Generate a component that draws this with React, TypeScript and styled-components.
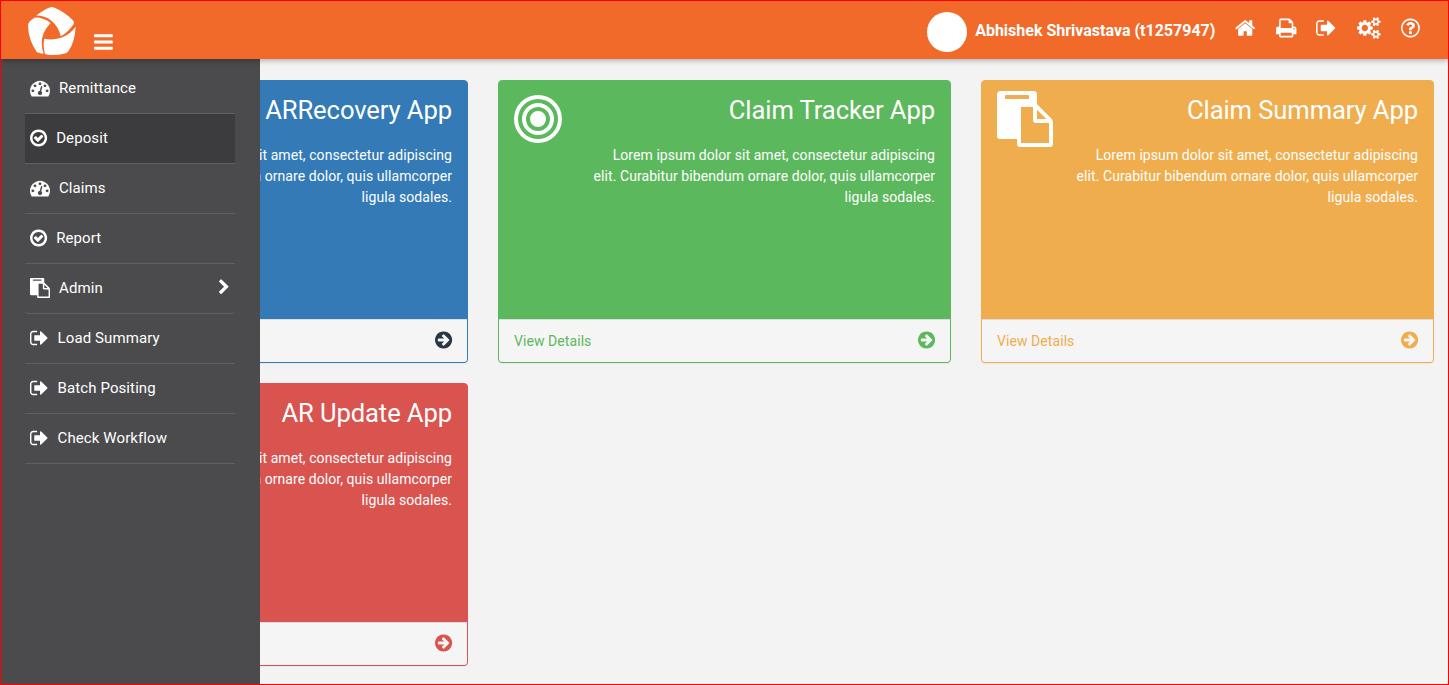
import React from "react";
import styled, { createGlobalStyle } from "styled-components";

const GlobalStyle = createGlobalStyle`
  *, *::before, *::after { box-sizing: border-box; }
  body {
    margin: 0;
    background: #f3f3f3;
    font-family: Roboto, "Liberation Sans", sans-serif;
    font-size: 15px;
    color: #fff;
  }
`;

/* Glyphs are drawn on a 1792-unit em: [left offset, advance width, outline]. */
const disc =
  "q0 209-103 385.5t-279.5 279.5-385.5 103-385.5-103-279.5-279.5-103-385.5 103-385.5 279.5-279.5 385.5-103 385.5 103 279.5 279.5 103 385.5z";
const bar = "v128q0 26-19 45t-45 19h-1408q-26 0-45-19t-19-45v-128q0-26 19-45t45-19h1408q26 0 45 19t19 45z";
const smallCog =
  "v140q0 16-149 31-12 27-30 52 51 113 51 138 0 4-4 7-122 71-124 71-8 0-46-47t-52-68q-20 2-30 2t-30-2q-14 21-52 68t-46 47q-2 0-124-71-4-3-4-7 0-25 51-138-18-25-30-52-149-15-149-31v-140q0-16 149-31 13-29 30-52-51-113-51-138 0-4 4-7 4-2 35-20t59-34 30-16q8 0 46 46.5t52 67.5q20-2 30-2t30 2q51-71 92-112l6-2q4 0 124 70 4 3 4 7 0 25-51 138 17 23 30 52 149 15 149 31z";
const dot = "q0-53-37.5-90.5t-90.5-37.5-90.5 37.5-37.5 90.5 37.5 90.5 90.5 37.5 90.5-37.5 37.5-90.5z";

const glyphs = {
  bars: [128, 1536, `M1664 1344${bar}M1664 832${bar}M1664 320${bar}`],
  home: [64, 1664, "M1472 992v480q0 26-19 45t-45 19h-384v-384h-256v384h-384q-26 0-45-19t-19-45v-480q0-1 .5-3t.5-3l575-474 575 474q1 2 1 6zm223-69l-62 74q-8 9-21 11h-3q-13 0-21-7l-692-577-692 577q-12 8-24 7-13-2-21-11l-62-74q-8-10-7-23.5t11-21.5l719-599q32-26 76-26t76 26l244 204v-195q0-14 9-23t23-9h192q14 0 23 9t9 23v408l219 182q10 8 11 21.5t-7 23.5z"],
  print: [64, 1664, "M448 1536h896v-256h-896v256zm0-640h896v-384h-160q-40 0-68-28t-28-68v-160h-640v640zm1152 64q0-26-19-45t-45-19-45 19-19 45 19 45 45 19 45-19 19-45zm128 0v416q0 13-9.5 22.5t-22.5 9.5h-224v160q0 40-28 68t-68 28h-960q-40 0-68-28t-28-68v-160h-224q-13 0-22.5-9.5t-9.5-22.5v-416q0-79 56.5-135.5t135.5-56.5h64v-544q0-40 28-68t68-28h672q40 0 88 20t76 48l152 152q28 28 48 76t20 88v256h64q79 0 135.5 56.5t56.5 135.5z"],
  signOut: [64, 1664, "M704 1440q0 4 1 20t.5 26.5-3 23.5-10 19.5-20.5 6.5h-320q-119 0-203.5-84.5t-84.5-203.5v-704q0-119 84.5-203.5t203.5-84.5h320q13 0 22.5 9.5t9.5 22.5q0 4 1 20t.5 26.5-3 23.5-10 19.5-20.5 6.5h-320q-66 0-113 47t-47 113v704q0 66 47 113t113 47h312l11.5 1 11.5 3 8 5.5 7 9 2 13.5zm928-544q0 26-19 45l-544 544q-19 19-45 19t-45-19-19-45v-288h-448q-26 0-45-19t-19-45v-384q0-26 19-45t45-19h448v-288q0-26 19-45t45-19 45 19l544 544q19 19 19 45z"],
  cogs: [0, 1920, `M896 896q0-106-75-181t-181-75-181 75-75 181 75 181 181 75 181-75 75-181zm768 512q0-52-38-90t-90-38-90 38-38 90q0 53 37.5 90.5t90.5 37.5 90.5-37.5 37.5-90.5zm0-1024q0-52-38-90t-90-38-90 38-38 90q0 53 37.5 90.5t90.5 37.5 90.5-37.5 37.5-90.5zm-384 421v185q0 10-7 19.5t-16 10.5l-155 24q-11 35-32 76 34 48 90 115 7 11 7 20 0 12-7 19-23 30-82.5 89.5t-78.5 59.5q-11 0-21-7l-115-90q-37 19-77 31-11 108-23 155-7 24-30 24h-186q-11 0-20-7.5t-10-17.5l-23-153q-34-10-75-31l-118 89q-7 7-20 7-11 0-21-8-144-133-144-160 0-9 7-19 10-14 41-53t47-61q-23-44-35-82l-152-24q-10-1-17-9.5t-7-19.5v-185q0-10 7-19.5t16-10.5l155-24q11-35 32-76-34-48-90-115-7-11-7-20 0-12 7-20 22-30 82-89t79-59q11 0 21 7l115 90q34-18 77-32 11-108 23-154 7-24 30-24h186q11 0 20 7.5t10 17.5l23 153q34 10 75 31l118-89q8-7 20-7 11 0 21 8 144 133 144 160 0 8-7 19-12 16-42 54t-45 60q23 48 34 82l152 23q10 2 17 10.5t7 19.5zM1920 1338${smallCog}M1920 314${smallCog}`],
  help: [128, 1536, `M1008 1200v160q0 14-9 23t-23 9h-160q-14 0-23-9t-9-23v-160q0-14 9-23t23-9h160q14 0 23 9t9 23zm256-496q0 50-15 90t-45.5 69-52 44-59.5 36q-32 18-46.5 28t-26 24-11.5 29v32q0 14-9 23t-23 9h-160q-14 0-23-9t-9-23v-68q0-35 10.5-64.5t24-47.5 39-35.5 41-25.5 44.5-21q53-25 75-43t22-49q0-42-43.5-71.5t-95.5-29.5q-56 0-95 27-29 20-80 83-9 12-25 12-11 0-19-6l-108-82q-10-7-12-20t5-23q122-192 349-192 129 0 238.5 89.5t109.5 214.5zm-368-448q-130 0-248.5 51t-204 136.5-136.5 204-51 248.5 51 248.5 136.5 204 204 136.5 248.5 51 248.5-51 204-136.5 136.5-204 51-248.5-51-248.5-136.5-204-204-136.5-248.5-51zM1664 896${disc}`],
  gauge: [0, 1792, `M384 1152${dot}M576 704${dot}M1004 1185l101-382q6-26-7.5-48.5t-38.5-29.5-48 6.5-30 39.5l-101 382q-60 5-107 43.5t-63 98.5q-20 77 20 146t117 89 146-20 89-117q16-60-6-117t-72-91zM1664 1152${dot}M1024 512${dot}M1472 704${dot}M1792 1152q0 261-141 483-19 29-54 29h-1402q-35 0-54-29-141-221-141-483 0-182 71-348t191-286 286-191 348-71 348 71 286 191 191 286 71 348z`],
  check: [128, 1536, `M1299 813l-422 422q-19 19-45 19t-45-19l-294-294q-19-19-19-45t19-45l102-102q19-19 45-19t45 19l147 147 275-275q19-19 45-19t45 19l102 102q19 19 19 45t-19 45zm141 83q0-148-73-273t-198-198-273-73-273 73-198 198-73 273 73 273 198 198 273 73 273-73 198-198 73-273zM1664 896${disc}`],
  paste: [0, 1792, "M768 1664h896v-640h-416q-40 0-68-28t-28-68v-416h-384v1152zm256-1440v-64q0-13-9.5-22.5t-22.5-9.5h-704q-13 0-22.5 9.5t-9.5 22.5v64q0 13 9.5 22.5t22.5 9.5h704q13 0 22.5-9.5t9.5-22.5zm256 672h299l-299-299v299zm512 128v672q0 40-28 68t-68 28h-960q-40 0-68-28t-28-68v-160h-544q-40 0-68-28t-28-68v-1344q0-40 28-68t68-28h1088q40 0 68 28t28 68v328q21 13 36 28l408 408q28 28 48 76t20 88z"],
  chevron: [346, 1036, "M1363 877l-742 742q-19 19-45 19t-45-19l-166-166q-19-19-19-45t19-45l531-531-531-531q-19-19-19-45t19-45l166-166q19-19 45-19t45 19l742 742q19 19 19 45t-19 45z"],
  arrow: [128, 1536, `M1413 896q0-27-18-45l-91-91-362-362q-18-18-45-18t-45 18l-91 91q-18 18-18 45t18 45l189 189h-502q-26 0-45 19t-19 45v128q0 26 19 45t45 19h502l-189 189q-19 19-19 45t19 45l91 91q18 18 45 18t45-18l362-362 91-91q18-18 18-45zM1664 896${disc}`],
  target: [128, 1536, "M1152 896a256 256 0 1 1-512 0a256 256 0 1 1 512 0zM1408 896a512 512 0 1 1-1024 0a512 512 0 1 1 1024 0zM1280 896a384 384 0 1 0-768 0a384 384 0 1 0 768 0zM1664 896a768 768 0 1 1-1536 0a768 768 0 1 1 1536 0zM1536 896a640 640 0 1 0-1280 0a640 640 0 1 0 1280 0z"],
} as const;

type GlyphName = keyof typeof glyphs;

const GlyphSvg = styled.svg`
  display: block;
  flex: none;
  fill: currentColor;
  overflow: visible;
`;

function Glyph({ name, size, className }: { name: GlyphName; size: number; className?: string }) {
  const [left, advance, d] = glyphs[name];
  return (
    <GlyphSvg className={className} width={(size * advance) / 1792} height={size} viewBox={`${left} 0 ${advance} 1792`}>
      <path d={d} fillRule={name === "target" ? "evenodd" : "nonzero"} />
    </GlyphSvg>
  );
}

const Page = styled.div`
  position: relative;
  height: 685px;
  border: 1px solid #f00;
  overflow: hidden;
  background: #f3f3f3;
`;

const Navbar = styled.header`
  position: relative;
  z-index: 3;
  display: flex;
  align-items: flex-start;
  height: 58px;
  padding: 0 28.6px 0 26px;
  background: #f26a2a;
  box-shadow: 0 2px 5px rgba(0, 0, 0, 0.26);
`;

const Logo = styled.svg`
  width: 50px;
  height: 50px;
  margin-top: 5px;
  fill: #fff;
`;

const MenuButton = styled.div`
  margin: 30px auto 0 17px;
`;

const Avatar = styled.div`
  width: 40px;
  height: 40px;
  margin-top: 11px;
  border-radius: 50%;
  background: #fff;
`;

const UserName = styled.strong`
  margin: 19px 0 0 8px;
  font-size: 16px;
  line-height: 21px;
  font-weight: 700;
  white-space: nowrap;
`;

const Tools = styled.nav`
  display: flex;
  gap: 20.1px;
  margin: 16px 0 0 20px;
`;

const Sidebar = styled.aside`
  position: absolute;
  z-index: 2;
  top: 58px;
  bottom: 0;
  left: 0;
  width: 259px;
  padding: 5px 25px 0 24px;
  background: #4b4b4d;
`;

const MenuItem = styled.div<{ $active?: boolean; $rounded?: boolean }>`
  display: flex;
  align-items: center;
  gap: 9px;
  height: 50px;
  padding: 0 6px 2px 5px;
  border-bottom: 1px solid #606062;
  border-radius: ${(p) => (p.$rounded ? "0 0 4px 4px" : "0")};
  background: ${(p) => (p.$active ? "#3c3c3e" : "transparent")};
`;

const MenuLabel = styled.span`
  flex: 1;
  font-size: 15px;
  line-height: 20px;
  letter-spacing: 0.1px;
`;

const Cards = styled.main`
  display: grid;
  grid-template-columns: repeat(3, 453px);
  gap: 20px 30px;
  padding: 21px 14px 0;
`;

const Card = styled.section<{ $color: string }>`
  display: flex;
  flex-direction: column;
  height: 283px;
  border: 1px solid ${(p) => p.$color};
  border-radius: 4px;
  background: ${(p) => p.$color};
  box-shadow: 0 1px 1px rgba(0, 0, 0, 0.05);
  overflow: hidden;
`;

const CardBody = styled.div`
  display: flex;
  justify-content: space-between;
  flex: 1;
  padding: 10px 15px 0;
`;

const CardText = styled.div`
  width: 345px;
  text-align: right;
`;

const CardTitle = styled.h2`
  margin: 0;
  font-size: 25.6px;
  font-weight: 400;
  line-height: 39px;
  letter-spacing: -0.1px;
`;

const CardCopy = styled.p`
  margin: 15px 0 0;
  font-size: 14px;
  line-height: 21px;
  letter-spacing: 0.07px;
`;

const CardFooter = styled.footer<{ $color: string }>`
  display: flex;
  align-items: center;
  justify-content: space-between;
  height: 43px;
  padding: 0 15px;
  border-top: 1px solid #ddd;
  background: #f5f5f5;
  color: ${(p) => p.$color};
  font-size: 14px;
  letter-spacing: 0.07px;
`;

const FooterLabel = styled.span<{ $covered: boolean }>`
  visibility: ${(p) => (p.$covered ? "hidden" : "visible")};
`;

const FooterArrow = styled(Glyph)<{ $color?: string }>`
  color: ${(p) => p.$color};
  margin-top: -3px;
`;

const tools: GlyphName[] = ["home", "print", "signOut", "cogs", "help"];

const menu: { label: string; icon: GlyphName; active?: boolean; expandable?: boolean }[] = [
  { label: "Remittance", icon: "gauge" },
  { label: "Deposit", icon: "check", active: true },
  { label: "Claims", icon: "gauge" },
  { label: "Report", icon: "check" },
  { label: "Admin", icon: "paste", expandable: true },
  { label: "Load Summary", icon: "signOut" },
  { label: "Batch Positing", icon: "signOut" },
  { label: "Check Workflow", icon: "signOut" },
];

const cards: { title: string; color: string; icon: GlyphName; arrow?: string }[] = [
  { title: "ARRecovery App", color: "#337ab7", icon: "gauge", arrow: "#2b3643" },
  { title: "Claim Tracker App", color: "#5cb85c", icon: "target" },
  { title: "Claim Summary App", color: "#f0ad4e", icon: "paste" },
  { title: "AR Update App", color: "#d9534f", icon: "check" },
];

export default function App() {
  return (
    <Page>
      <GlobalStyle />
      <Navbar>
        <Logo viewBox="27 6 50 50">
          <path d="M36.2 15.6Q44 9.500 50.500 7.300Q52 6.800 54 7.500Q65 12 73 20.500Q74.800 22.500 73.500 24.200Q68 32.500 60.700 36.300Q58.500 26.500 51.500 20.700Q44.500 15.600 36.200 15.600Z" />
          <path d="M34.800 17.500Q43.500 17.300 50.600 23Q41.500 32.500 41.700 43Q41.800 49 43.600 53.600Q38.500 53.300 36.800 52Q28.500 40 28 26Q28 23.500 29.300 22Q31.500 19.500 34.800 17.500Z" />
          <path d="M75.600 26.800Q75 42 68.500 51Q67.500 52.700 65 53.400Q55 56 46.500 54.500L45 54Q42.800 46 44.200 38.800Q53 40.500 61 37.800Q70.500 34.500 75.600 26.800Z" />
        </Logo>
        <MenuButton>
          <Glyph name="bars" size={22} />
        </MenuButton>
        <Avatar />
        <UserName>Abhishek Shrivastava (t1257947)</UserName>
        <Tools>
          {tools.map((name) => (
            <Glyph key={name} name={name} size={22} />
          ))}
        </Tools>
      </Navbar>
      <Sidebar>
        {menu.map((item) => (
          <MenuItem key={item.label} $active={item.active} $rounded={item.expandable}>
            <Glyph name={item.icon} size={20} />
            <MenuLabel>{item.label}</MenuLabel>
            {item.expandable && <Glyph name="chevron" size={16.5} />}
          </MenuItem>
        ))}
      </Sidebar>
      <Cards>
        {cards.map((card, index) => (
          <Card key={card.title} $color={card.color}>
            <CardBody>
              <Glyph name={card.icon} size={56} />
              <CardText>
                <CardTitle>{card.title}</CardTitle>
                <CardCopy>
                  Lorem ipsum dolor sit amet, consectetur adipiscing elit. Curabitur bibendum ornare dolor, quis
                  ullamcorper ligula sodales.
                </CardCopy>
              </CardText>
            </CardBody>
            <CardFooter $color={card.color}>
              {/* The open sidebar lies over the footers of the first column. */}
              <FooterLabel $covered={index % 3 === 0}>View Details</FooterLabel>
              <FooterArrow name="arrow" size={20} $color={card.arrow ?? card.color} />
            </CardFooter>
          </Card>
        ))}
      </Cards>
    </Page>
  );
}
